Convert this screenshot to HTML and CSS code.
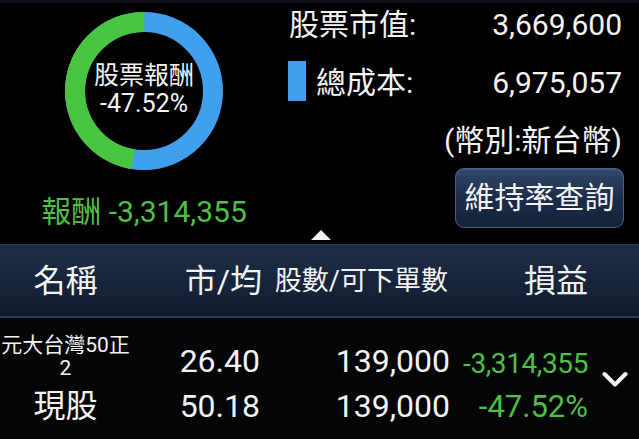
FILE: index.html
```html
<!DOCTYPE html>
<html lang="zh-Hant">
<head>
<meta charset="utf-8">
<title>庫存損益</title>
<link rel="stylesheet" href="styles.css">
</head>
<body>
<div class="screen">
  <div class="status"></div>
  <section class="summary">
    <div class="chart-col">
      <div class="donut">
        <svg class="ring" width="158" height="158" viewBox="0 0 158 158">
          <circle cx="79" cy="79" r="69" fill="none" stroke="#41a0ed" stroke-width="20"/>
          <circle cx="79" cy="79" r="69" fill="none" stroke="#4ac540" stroke-width="20" stroke-dasharray="206 434" transform="rotate(99 79 79)"/>
        </svg>
        <div class="donut-label">
          <div class="dl-title">股票報酬</div>
          <div class="dl-value">-47.52%</div>
        </div>
      </div>
      <div class="reward">報酬 -3,314,355</div>
    </div>
    <div class="info-col">
      <div class="info-row r1"><span class="label">股票市值:</span><span class="value">3,669,600</span></div>
      <div class="info-row r2"><span class="swatch"></span><span class="label">總成本:</span><span class="value">6,975,057</span></div>
      <div class="currency">(幣別:新台幣)</div>
      <div class="btn-wrap"><button class="btn">維持率查詢</button></div>
    </div>
  </section>
  <div class="collapse"><span class="tri"></span></div>
  <div class="thead grid">
    <div class="th c1">名稱</div>
    <div class="th c2">市/均</div>
    <div class="th c3 small">股數/可下單數</div>
    <div class="th c4">損益</div>
    <div class="th c5"></div>
  </div>
  <div class="tbody grid">
    <div class="name">元大台灣50正2</div>
    <div class="num c2v">26.40</div>
    <div class="num c3v">139,000</div>
    <div class="num c4v gain tight">-3,314,355</div>
    <div class="chev">
      <svg width="26" height="17" viewBox="0 0 26 17"><polyline points="2.5,3 13,13.5 23.5,3" fill="none" stroke="#f4f4f4" stroke-width="4" stroke-linecap="round" stroke-linejoin="round"/></svg>
    </div>
    <div class="kind">現股</div>
    <div class="num c2v">50.18</div>
    <div class="num c3v">139,000</div>
    <div class="num c4v gain pct">-47.52%</div>
  </div>
</div>
</body>
</html>
```

FILE: styles.css
```css
* { box-sizing: border-box; }
html, body { margin: 0; padding: 0; background: #000; }
body {
  font-family: Roboto, "Noto Sans CJK TC", sans-serif;
  color: #f3f3f3;
}
.screen { width: 639px; height: 439px; overflow: hidden; background: #000; }
.status { height: 3px; background: #0d0f16; }

.summary { display: flex; height: 227px; }
.chart-col { width: 288px; display: flex; flex-direction: column; align-items: center; }
.donut { display: grid; margin-top: 9px; width: 158px; height: 158px; }
.ring, .donut-label { grid-area: 1 / 1; }
.donut-label {
  align-self: center; justify-self: center; text-align: center;
  font-size: 25px; line-height: 28px; color: #f4f4f4; margin-top: -2px;
}
.reward { margin-top: 24px; font-size: 30px; line-height: 36px; color: #4fbf46; white-space: nowrap; }

.info-col { flex: 1; padding-right: 17px; display: flex; flex-direction: column; }
.info-row { display: flex; align-items: center; font-size: 30px; line-height: 36px; }
.info-row .value { margin-left: auto; }
.r1 { margin-top: 4px; padding-left: 1px; }
.r2 { margin-top: 18px; height: 40px; }
.r2 .label, .r2 .value { padding-top: 3px; }
.swatch { width: 18px; height: 40px; background: #41a0ed; margin-right: 10px; }
.currency { margin-top: 22px; font-size: 30px; line-height: 36px; text-align: right; }
.btn-wrap { display: flex; justify-content: flex-end; margin-top: 9px; margin-right: -2px; }
.btn {
  width: 169px; height: 60px; padding: 0;
  font-family: Roboto, "Noto Sans CJK TC", sans-serif;
  font-size: 30px; line-height: 36px; color: #f4f4f4;
  background: linear-gradient(#31476a, #1d2e4a 50%, #13213a);
  border: 1px solid #4a6083; border-radius: 9px;
  box-shadow: inset 0 1px 0 rgba(255,255,255,0.12);
}

.collapse { height: 14px; display: flex; justify-content: center; padding-left: 3px; }
.tri {
  width: 0; height: 0;
  border-left: 10px solid transparent; border-right: 10px solid transparent;
  border-bottom: 10px solid #f4f4f4;
}

.grid { display: grid; grid-template-columns: 131px 140px 181px 138px 49px; }
.thead {
  height: 74px; align-items: center;
  background: linear-gradient(#1f2e47, #17253c 50%, #101b2e);
  border-top: 1px solid #28374f; border-bottom: 2px solid #2e3e56;
  font-size: 32px; line-height: 40px;
}
.th.c1 { text-align: center; }
.th.c2 { text-align: right; padding-right: 9px; }
.th.c3 { text-align: right; padding-right: 4px; }
.th.c4 { text-align: right; padding-right: 2px; }
.small { font-size: 27px; }

.tbody {
  height: 121px; padding-top: 21px; background: #040507;
  grid-template-rows: 45px 45px;
  font-size: 32px; line-height: 45px;
}
.name {
  align-self: start; margin-top: -5px; text-align: center;
  font-size: 21px; line-height: 23px; padding: 0 1px;
}
.kind { text-align: center; font-size: 32px; }
.num { text-align: right; white-space: nowrap; }
.c2v { padding-right: 11px; }
.c3v { padding-right: 2px; }
.c4v { padding-right: 2px; }
.gain { color: #4fbf46; }
.tight { font-size: 28px; letter-spacing: -0.4px; padding-top: 2px; }
.pct { font-size: 31px; }
.chev { grid-column: 5; grid-row: 1 / span 2; align-self: start; margin-top: 32px; padding-left: 12px; line-height: 0; }
```
